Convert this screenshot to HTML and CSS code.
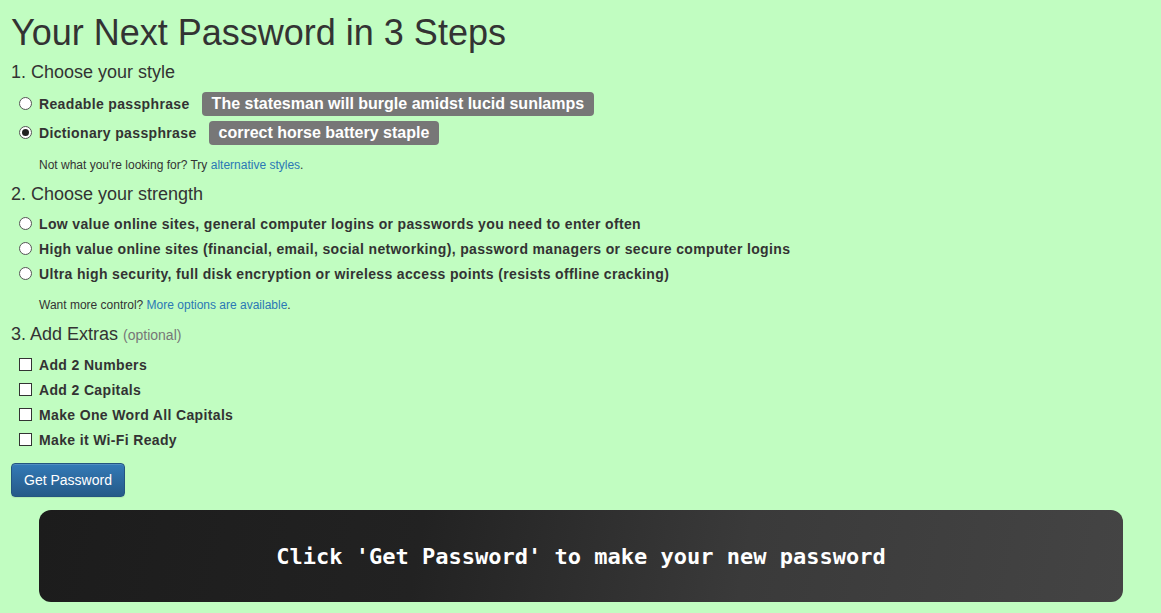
FILE: index.html
```html
<!DOCTYPE html>
<html>
<head>
<meta charset="utf-8">
<link rel="stylesheet" href="styles.css">
</head>
<body>
<div class="page">
  <h1 class="title">Your Next Password in 3 Steps</h1>

  <h4 class="step step-first">1. Choose your style</h4>
  <div class="options options-style">
    <label class="opt opt-tall"><span class="radio"></span><span class="opt-text">Readable passphrase</span><span class="badge">The statesman will burgle amidst lucid sunlamps</span></label>
    <label class="opt opt-tall"><span class="radio checked"></span><span class="opt-text">Dictionary passphrase</span><span class="badge">correct horse battery staple</span></label>
  </div>
  <p class="note note-first">Not what you're looking for? Try <a href="#">alternative styles</a>.</p>

  <h4 class="step">2. Choose your strength</h4>
  <div class="options">
    <label class="opt"><span class="radio"></span><span class="opt-text">Low value online sites, general computer logins or passwords you need to enter often</span></label>
    <label class="opt"><span class="radio"></span><span class="opt-text">High value online sites (financial, email, social networking), password managers or secure computer logins</span></label>
    <label class="opt"><span class="radio"></span><span class="opt-text">Ultra high security, full disk encryption or wireless access points (resists offline cracking)</span></label>
  </div>
  <p class="note note-second">Want more control? <a href="#">More options are available</a>.</p>

  <h4 class="step step-last">3. Add Extras <small class="optional">(optional)</small></h4>
  <div class="options">
    <label class="opt"><span class="check"></span><span class="opt-text">Add 2 Numbers</span></label>
    <label class="opt"><span class="check"></span><span class="opt-text">Add 2 Capitals</span></label>
    <label class="opt"><span class="check"></span><span class="opt-text">Make One Word All Capitals</span></label>
    <label class="opt"><span class="check"></span><span class="opt-text">Make it Wi-Fi Ready</span></label>
  </div>

  <div class="actions">
    <button class="btn-primary">Get Password</button>
  </div>

  <div class="result">Click 'Get Password' to make your new password</div>
</div>
</body>
</html>
```

FILE: styles.css
```css
html, body {
  margin: 0;
  padding: 0;
  background: #c1fdc1;
}
body {
  font-family: "Liberation Sans", Arial, Helvetica, sans-serif;
  color: #333;
  font-size: 14px;
}
.page {
  padding: 13px 11px 0 11px;
  display: flex;
  flex-direction: column;
}
.title {
  margin: 0;
  font-size: 36px;
  font-weight: normal;
  line-height: 40px;
  color: #333;
}
.step {
  margin: 10px 0 0 0;
  font-size: 18px;
  font-weight: normal;
  line-height: 20px;
}
.step-first {
  margin-top: 9px;
}
.step-last {
  margin-top: 10px;
}
.optional {
  font-size: 14px;
  color: #777;
}
.options {
  display: flex;
  flex-direction: column;
  margin-top: 7px;
  padding-left: 8px;
}
.opt {
  display: flex;
  align-items: center;
  height: 25px;
  font-weight: bold;
  font-size: 14px;
  letter-spacing: 0.35px;
}
.opt-tall {
  height: 29px;
}
.radio {
  width: 11px;
  height: 11px;
  border: 1px solid #555;
  border-radius: 50%;
  background: #fff;
  margin-right: 7px;
  flex: none;
  position: relative;
}
.radio.checked::after {
  content: "";
  position: absolute;
  left: 2px;
  top: 2px;
  width: 7px;
  height: 7px;
  border-radius: 50%;
  background: #222;
}
.check {
  width: 11px;
  height: 11px;
  border: 1px solid #333;
  background: #fff;
  margin-right: 7px;
  flex: none;
}
.badge {
  margin-left: 12px;
  background: #777;
  color: #fff;
  font-size: 16px;
  font-weight: bold;
  line-height: 24px;
  height: 24px;
  padding: 0 10px;
  border-radius: 4px;
  letter-spacing: 0;
}
.note {
  margin: 10px 0 0 28px;
  font-size: 12px;
  line-height: 17px;
}
.note-second {
  margin-top: 11px;
}
.note a {
  color: #2a78b5;
  text-decoration: none;
}
.actions {
  margin-top: 11px;
  display: flex;
}
.btn-primary {
  font-family: "Liberation Sans", Arial, sans-serif;
  font-size: 14px;
  color: #fff;
  height: 34px;
  padding: 0 12px;
  border: 1px solid #245580;
  border-radius: 4px;
  background: linear-gradient(to bottom, #337ab7 0%, #265a88 100%);
  box-shadow: inset 0 1px 0 rgba(255,255,255,0.15), 0 1px 1px rgba(0,0,0,0.075);
}
.result {
  margin: 13px 27px 0 28px;
  height: 92px;
  border-radius: 12px;
  background: linear-gradient(100deg, #1c1c1c 0%, #222 35%, #3a3a3a 65%, #444 100%);
  color: #fff;
  display: flex;
  align-items: center;
  justify-content: center;
  font-family: "DejaVu Sans Mono", "Liberation Mono", monospace;
  font-weight: bold;
  font-size: 22px;
}
```
